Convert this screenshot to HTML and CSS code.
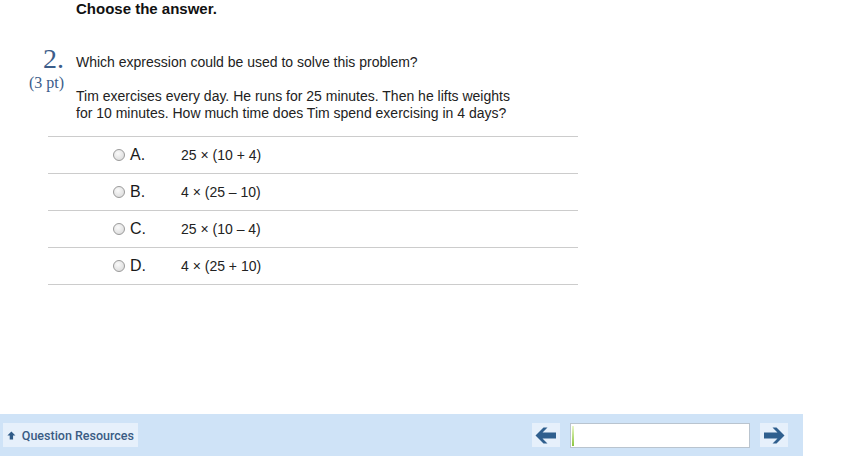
FILE: index.html
```
<!DOCTYPE html>
<html lang="en">
  <head>
    <meta charset="UTF-8" />
    <title>Question 2</title>
    <link rel="stylesheet" href="styles.css">
  </head>
  <body>
    <div class="page">
      <h4 class="instr">Choose the answer.</h4>
      <div class="question">
        <div class="qnum">
          <div class="num">2.</div>
          <div class="pts">(3 pt)</div>
        </div>
        <div class="qtext">
          <p>Which expression could be used to solve this problem?</p>
          <p class="prob">Tim exercises every day. He runs for 25 minutes. Then he lifts weights<br>for 10 minutes. How much time does Tim spend exercising in 4 days?</p>
        </div>
      </div>
      <div class="answers">
        <label class="row"><span class="radio"></span><span class="letter">A.</span><span class="expr">25 × (10 + 4)</span></label>
        <label class="row"><span class="radio"></span><span class="letter">B.</span><span class="expr">4 × (25 – 10)</span></label>
        <label class="row"><span class="radio"></span><span class="letter">C.</span><span class="expr">25 × (10 – 4)</span></label>
        <label class="row"><span class="radio"></span><span class="letter">D.</span><span class="expr">4 × (25 + 10)</span></label>
      </div>
    </div>
    <div class="bar">
      <button class="res">
        <svg width="11" height="11" viewBox="0 0 11 11"><path d="M5.5 0.5 L10.5 5.5 L7.6 5.5 L7.6 10.5 L3.4 10.5 L3.4 5.5 L0.5 5.5 Z" fill="#2f5b88"/></svg>
        Question Resources
      </button>
      <div class="nav">
        <button class="arrow">
          <svg width="22" height="17" viewBox="0 0 22 17"><path d="M0.5 8.5 L8.5 0.5 L12.5 0.5 L7.5 5.5 L21 5.5 L21 11.5 L7.5 11.5 L12.5 16.5 L8.5 16.5 Z" fill="#2f5f8e"/></svg>
        </button>
        <div class="progress"><span class="fill"></span></div>
        <button class="arrow">
          <svg width="22" height="17" viewBox="0 0 22 17"><path d="M21.5 8.5 L13.5 0.5 L9.5 0.5 L14.5 5.5 L1 5.5 L1 11.5 L14.5 11.5 L9.5 16.5 L13.5 16.5 Z" fill="#2f5f8e"/></svg>
        </button>
      </div>
    </div>
  </body>
</html>
```

FILE: styles.css
```
* {
  padding: 0;
  margin: 0;
  box-sizing: border-box;
}
body {
  font-family: "Liberation Sans", Arial, sans-serif;
  color: #1a1a1a;
  background: #fff;
  width: 861px;
  height: 476px;
  overflow: hidden;
}
.page {
  padding-left: 48px;
  padding-top: 2px;
  width: 578px;
  height: 414px;
}
.instr {
  font-size: 15px;
  font-weight: 700;
  margin-left: 28px;
  line-height: 14px;
  color: #111;
}
.question {
  display: flex;
  margin-top: 29px;
  margin-left: -48px;
}
.qnum {
  width: 76px;
  padding-right: 12px;
  text-align: right;
  font-family: "Liberation Serif", "Times New Roman", serif;
  color: #3c5d8a;
}
.num {
  font-size: 28px;
  line-height: 28px;
}
.pts {
  font-size: 16px;
  line-height: 18px;
  margin-top: 1px;
}
.qtext {
  font-size: 14px;
  line-height: 17px;
  padding-top: 9px;
  color: #222;
}
.prob {
  margin-top: 17px;
}
.answers {
  margin-top: 14px;
  border-top: 1px solid #ccc;
}
.row {
  display: flex;
  align-items: center;
  height: 37px;
  border-bottom: 1px solid #ccc;
  padding-left: 65px;
  padding-bottom: 1px;
}
.radio {
  width: 12px;
  height: 12px;
  border-radius: 50%;
  border: 1px solid #9a9a9a;
  background: radial-gradient(circle at 40% 35%, #fafafa, #d6d6d6);
  margin-right: 5px;
}
.letter {
  font-size: 16px;
  width: 51px;
  color: #1a1a1a;
}
.expr {
  font-size: 14px;
  color: #222;
}
.bar {
  width: 803px;
  height: 42px;
  background: #cfe3f7;
  display: flex;
  align-items: center;
  justify-content: space-between;
  padding-left: 3px;
  padding-right: 15px;
}
.res {
  display: flex;
  align-items: center;
  gap: 6px;
  height: 24px;
  padding: 0 4px 0 4px;
  border: none;
  background: #e6f0fb;
  color: #3a5c84;
  font-family: Roboto, "Liberation Sans", sans-serif;
  font-size: 12.5px;
  font-weight: 500;
  width: 135px;
  white-space: nowrap;
}
.nav {
  display: flex;
  align-items: center;
  gap: 10px;
}
.arrow {
  width: 28px;
  height: 24px;
  border: none;
  background: #e6f0fb;
  display: flex;
  align-items: center;
  justify-content: center;
}
.progress {
  width: 180px;
  height: 25px;
  background: #fff;
  border: 1px solid #b9c4cf;
  position: relative;
}
.fill {
  position: absolute;
  left: 1px;
  top: 2px;
  bottom: 1px;
  width: 2px;
  background: linear-gradient(#eaf7c8, #8cc63f);
}
```
